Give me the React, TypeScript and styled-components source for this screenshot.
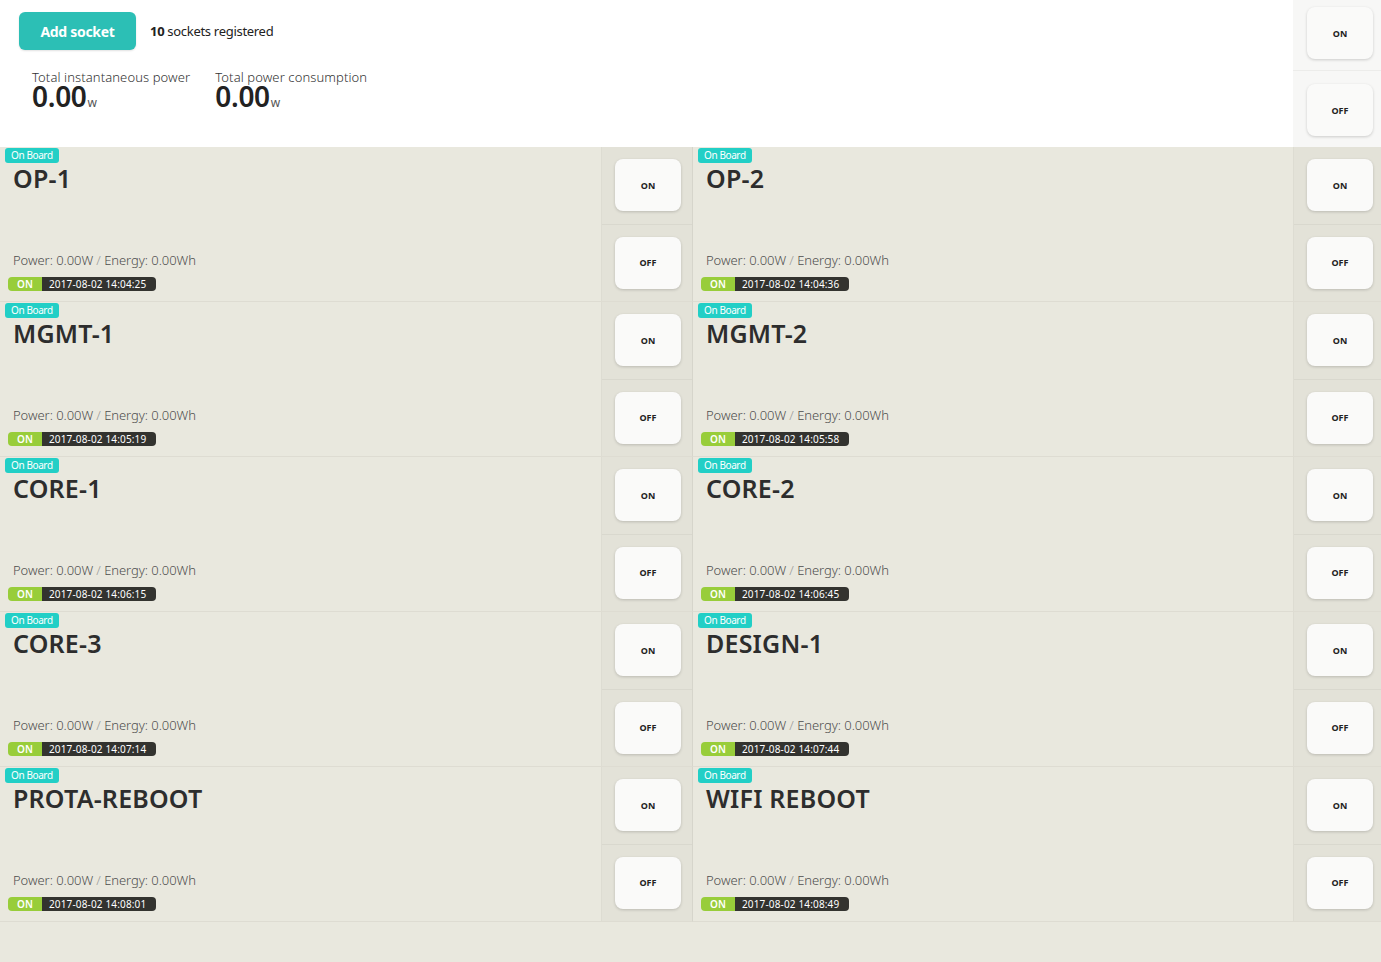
import React from "react";
import styled, { createGlobalStyle } from "styled-components";

const GlobalStyle = createGlobalStyle`
  html, body { margin: 0; padding: 0; }
  body {
    background: #e9e8de;
    font-family: "Noto Sans", "Open Sans", sans-serif;
    color: #333;
  }
  * { box-sizing: border-box; }
`;

const Page = styled.div`
  width: 1381px;
  min-height: 962px;
  background: #e9e8de;
`;

const Header = styled.header`
  display: grid;
  grid-template-columns: 1fr 88px;
  height: 147px;
  background: #ffffff;
`;

const HeaderMain = styled.div`
  display: flex;
  flex-direction: column;
  padding: 12px 0 0 19px;
`;

const TopRow = styled.div`
  display: flex;
  align-items: center;
  gap: 14px;
`;

const AddButton = styled.button`
  width: 117px;
  height: 38px;
  border: none;
  border-radius: 6px;
  background: #2cbfb5;
  color: #fff;
  font-family: "Noto Sans", sans-serif;
  font-size: 14px;
  font-weight: 700;
  letter-spacing: -0.3px;
  box-shadow: 0 1px 2px rgba(0, 0, 0, 0.12);
  cursor: pointer;
`;

const Registered = styled.span`
  font-size: 13px;
  color: #222;
  letter-spacing: -0.3px;
  b { font-weight: 700; }
`;

const Stats = styled.div`
  display: flex;
  gap: 25px;
  margin: 19px 0 0 13px;
`;

const Stat = styled.div`
  display: flex;
  flex-direction: column;
  gap: 1px;
`;

const StatLabel = styled.div`
  font-size: 13px;
  font-weight: 300;
  line-height: 16px;
  color: #333;
  letter-spacing: 0.1px;
`;

const StatValue = styled.div`
  font-size: 28px;
  font-weight: 600;
  line-height: 20px;
  color: #222;
  letter-spacing: -0.3px;
  small {
    font-size: 12px;
    font-weight: 400;
    color: #555;
    letter-spacing: 0;
    margin-left: 1px;
  }
`;

const HeaderSide = styled.div`
  display: flex;
  flex-direction: column;
  background: #f7f7f6;
`;

const HeaderCell = styled.div<{ $top: number; $grow?: boolean }>`
  display: flex;
  justify-content: flex-start;
  padding: ${(p) => p.$top}px 0 0 14px;
  height: ${(p) => (p.$grow ? "auto" : "70px")};
  flex: ${(p) => (p.$grow ? 1 : "none")};
  border-top: ${(p) => (p.$grow ? "1px solid #ececea" : "none")};
`;

const ToggleButton = styled.button`
  width: 66px;
  height: 52px;
  border: none;
  border-radius: 8px;
  background: #fafaf9;
  color: #222;
  font-family: "Noto Sans", sans-serif;
  font-size: 9px;
  font-weight: 700;
  box-shadow: 0 1px 3px rgba(0, 0, 0, 0.18);
  cursor: pointer;
  padding: 0;
`;

const Grid = styled.div`
  display: grid;
  grid-template-columns: 693px 688px;
`;

const Card = styled.div<{ $side: number; $edge: boolean }>`
  display: grid;
  grid-template-columns: 1fr ${(p) => p.$side}px;
  height: 155px;
  border-bottom: 1px solid #dedcd2;
  border-right: ${(p) => (p.$edge ? "1px solid #d6d5cb" : "none")};
`;

const Content = styled.div`
  display: flex;
  flex-direction: column;
  padding: 1px 0 10px 0;
`;

const Badge = styled.span`
  align-self: flex-start;
  margin-left: 5px;
  height: 15px;
  padding: 0 6px;
  border-radius: 3px;
  background: #22cfc6;
  color: #fff;
  font-size: 10px;
  line-height: 15px;
  letter-spacing: -0.4px;
`;

const Title = styled.h2`
  margin: 0 0 0 13px;
  font-size: 25px;
  font-weight: 600;
  line-height: 30px;
  color: #2d2d2d;
  letter-spacing: 0.2px;
`;

const PowerLine = styled.div`
  margin: auto 0 0 13px;
  font-size: 13px;
  font-weight: 300;
  line-height: 18px;
  color: #4d4d4d;
  letter-spacing: -0.05px;
  span { color: #999; }
`;

const Pill = styled.div`
  display: flex;
  align-self: flex-start;
  margin: 8px 0 0 8px;
  height: 14px;
  border-radius: 4px;
  overflow: hidden;
  font-size: 10px;
  line-height: 14px;
  color: #fff;
`;

const PillState = styled.span`
  width: 34px;
  text-align: center;
  background: #98cd3a;
  font-weight: 600;
`;

const PillDate = styled.span`
  width: 114px;
  padding-left: 7px;
  background: #33332f;
  letter-spacing: 0.15px;
`;

const Side = styled.div`
  display: flex;
  flex-direction: column;
  background: #e3e2d8;
  border-left: 1px solid #dddcd2;
`;

const SideCell = styled.div<{ $divider?: boolean }>`
  flex: 1;
  display: flex;
  align-items: center;
  padding-left: 13px;
  border-top: ${(p) => (p.$divider ? "1px solid #d9d8ce" : "none")};
`;

type Socket = { name: string; time: string };

const sockets: Socket[] = [
  { name: "OP-1", time: "2017-08-02 14:04:25" },
  { name: "OP-2", time: "2017-08-02 14:04:36" },
  { name: "MGMT-1", time: "2017-08-02 14:05:19" },
  { name: "MGMT-2", time: "2017-08-02 14:05:58" },
  { name: "CORE-1", time: "2017-08-02 14:06:15" },
  { name: "CORE-2", time: "2017-08-02 14:06:45" },
  { name: "CORE-3", time: "2017-08-02 14:07:14" },
  { name: "DESIGN-1", time: "2017-08-02 14:07:44" },
  { name: "PROTA-REBOOT", time: "2017-08-02 14:08:01" },
  { name: "WIFI REBOOT", time: "2017-08-02 14:08:49" },
];

function SocketCard({ s, left }: { s: Socket; left: boolean }) {
  return (
    <Card $side={left ? 91 : 88} $edge={left}>
      <Content>
        <Badge>On Board</Badge>
        <Title>{s.name}</Title>
        <PowerLine>
          Power: 0.00W <span>/</span> Energy: 0.00Wh
        </PowerLine>
        <Pill>
          <PillState>ON</PillState>
          <PillDate>{s.time}</PillDate>
        </Pill>
      </Content>
      <Side>
        <SideCell>
          <ToggleButton>ON</ToggleButton>
        </SideCell>
        <SideCell $divider>
          <ToggleButton>OFF</ToggleButton>
        </SideCell>
      </Side>
    </Card>
  );
}

export default function App() {
  return (
    <Page>
      <GlobalStyle />
      <Header>
        <HeaderMain>
          <TopRow>
            <AddButton>Add socket</AddButton>
            <Registered>
              <b>10</b> sockets registered
            </Registered>
          </TopRow>
          <Stats>
            <Stat>
              <StatLabel>Total instantaneous power</StatLabel>
              <StatValue>
                0.00<small>w</small>
              </StatValue>
            </Stat>
            <Stat>
              <StatLabel>Total power consumption</StatLabel>
              <StatValue>
                0.00<small>w</small>
              </StatValue>
            </Stat>
          </Stats>
        </HeaderMain>
        <HeaderSide>
          <HeaderCell $top={7}>
            <ToggleButton>ON</ToggleButton>
          </HeaderCell>
          <HeaderCell $top={13} $grow>
            <ToggleButton>OFF</ToggleButton>
          </HeaderCell>
        </HeaderSide>
      </Header>
      <Grid>
        {sockets.map((s, i) => (
          <SocketCard key={s.name} s={s} left={i % 2 === 0} />
        ))}
      </Grid>
    </Page>
  );
}
